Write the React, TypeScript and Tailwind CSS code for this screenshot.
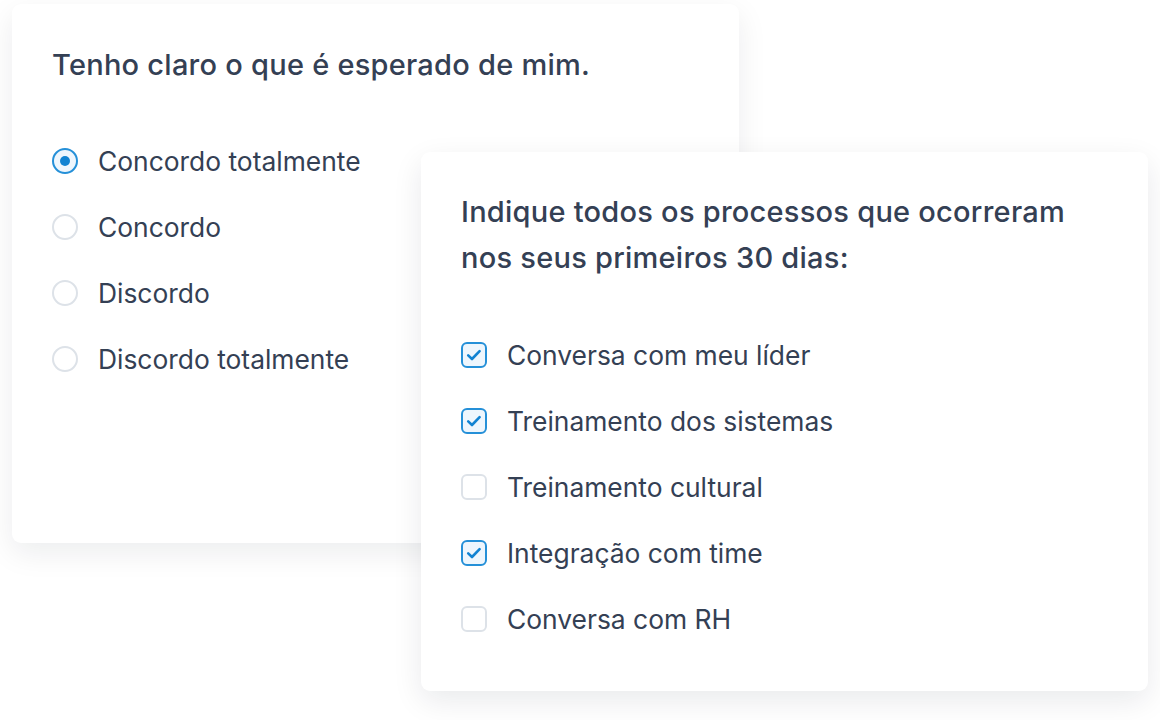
import React from "react";

const radios = [
  { label: "Concordo totalmente", checked: true },
  { label: "Concordo", checked: false },
  { label: "Discordo", checked: false },
  { label: "Discordo totalmente", checked: false },
];

const checks = [
  { label: "Conversa com meu líder", checked: true },
  { label: "Treinamento dos sistemas", checked: true },
  { label: "Treinamento cultural", checked: false },
  { label: "Integração com time", checked: true },
  { label: "Conversa com RH", checked: false },
];

function Radio({ checked }: { checked: boolean }) {
  return checked ? (
    <span className="flex h-[26px] w-[26px] shrink-0 items-center justify-center rounded-full border-2 border-[#2590d8] bg-[#eef6fd]">
      <span className="h-[10px] w-[10px] rounded-full bg-[#1283d2]" />
    </span>
  ) : (
    <span className="h-[26px] w-[26px] shrink-0 rounded-full border-2 border-[#dde2e8] bg-white" />
  );
}

function Check({ checked }: { checked: boolean }) {
  return checked ? (
    <span className="flex h-[26px] w-[26px] shrink-0 items-center justify-center rounded-[6px] border-2 border-[#2590d8] bg-[#eef6fd]">
      <svg width="18" height="18" viewBox="0 0 18 18" fill="none">
        <path d="M3.2 9.4 L7 13 L14.6 5.2" stroke="#1283d2" strokeWidth="2.6" strokeLinecap="round" strokeLinejoin="round" />
      </svg>
    </span>
  ) : (
    <span className="h-[26px] w-[26px] shrink-0 rounded-[6px] border-2 border-[#dde2e8] bg-white" />
  );
}

export default function App() {
  return (
    <div
      className="relative h-[720px] w-[1160px] overflow-hidden bg-white text-[#344054]"
      style={{ fontFamily: "Inter, 'Noto Sans', sans-serif" }}
    >
      <div className="absolute left-[12px] top-[4px] h-[539px] w-[727px] rounded-[9px] bg-white px-[40px] pt-[37px] shadow-[0_10px_30px_rgba(15,23,42,0.08)]">
        <h2 className="text-[29px] font-medium leading-[47px] tracking-[0.25px]">Tenho claro o que é esperado de mim.</h2>
        <div className="mt-[40px] flex flex-col">
          {radios.map((r) => (
            <div key={r.label} className="flex h-[66px] items-center gap-[20px]">
              <Radio checked={r.checked} />
              <span className="text-[26.4px] leading-[30px]">{r.label}</span>
            </div>
          ))}
        </div>
      </div>

      <div className="absolute left-[421px] top-[152px] h-[539px] w-[727px] rounded-[9px] bg-white px-[40px] pt-[37px] shadow-[0_10px_30px_rgba(15,23,42,0.09)]">
        <h2 className="text-[29px] font-medium leading-[46px] tracking-[0.25px]">
          Indique todos os processos que ocorreram
          <br />
          nos seus primeiros 30 dias:
        </h2>
        <div className="mt-[41px] flex flex-col">
          {checks.map((c) => (
            <div key={c.label} className="flex h-[66px] items-center gap-[20px]">
              <Check checked={c.checked} />
              <span className="text-[26.4px] leading-[30px]">{c.label}</span>
            </div>
          ))}
        </div>
      </div>
    </div>
  );
}
